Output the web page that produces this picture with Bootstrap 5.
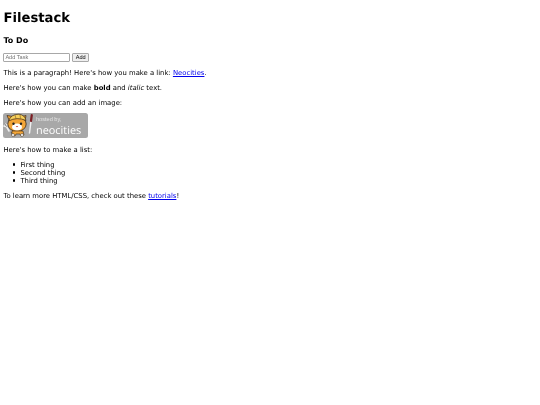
<!DOCTYPE html>
<html lang="en">
<head>
<meta charset="utf-8">
<title>Filestack</title>
<link rel="stylesheet" href="https://cdn.jsdelivr.net/npm/bootstrap@5.3.0/dist/css/bootstrap.min.css">
<style>
html,body{background:#fff;}
body{font-family:"DejaVu Sans",sans-serif;font-size:6.85px;line-height:8px;color:#000;padding:3.4px;text-rendering:geometricPrecision;}
.page-sheet{filter:blur(.3px);}
.page-title{font-size:13.2px;line-height:15.7px;font-weight:700;margin:8px 0 0;}
.sub-title{font-size:8px;line-height:9.2px;font-weight:700;margin:8.5px 0 0;}
.task-form{margin:8px 0 0;height:9px;gap:2px;}
.task-input{width:67px;height:9px;font-family:"Liberation Sans",sans-serif;font-size:5.6px;border:1px solid #a8a8a8;border-radius:1px;padding:0 1px;background:#fff;}
.task-input::placeholder{color:#757575;opacity:1;}
.task-btn{height:9px;width:16.5px;font-family:"Liberation Sans",sans-serif;font-size:5.6px;line-height:7px;border:1px solid #a8a8a8;border-radius:1px;background:#efefef;color:#000;padding:0;}
.copy{margin:7px 0 0;}
.copy a{color:#00e;text-decoration:underline;}
.things{margin:7px 0 0;padding-left:17px;list-style:none;}
.things li::before{content:"";display:inline-block;width:2.2px;height:2.2px;border-radius:50%;background:#000;margin-left:-7.4px;margin-right:5.2px;vertical-align:1.2px;}
.badge-pic{display:block;width:85px;height:25px;margin:6px 0 8px;}
</style>
</head>
<body>
<div class="page-sheet">
<h1 class="page-title">Filestack</h1>
<h3 class="sub-title">To Do</h3>
<form class="task-form d-flex align-items-center">
<input class="task-input" type="text" placeholder="Add Task">
<button class="task-btn" type="button">Add</button>
</form>
<p class="copy">This is a paragraph! Here's how you make a link: <a href="#">Neocities</a>.</p>
<p class="copy">Here's how you can make <strong>bold</strong> and <em>italic</em> text.</p>
<p class="copy">Here's how you can add an image:</p>
<svg class="badge-pic" viewBox="0 0 85 25" role="img" aria-label="hosted by neocities">
<rect width="85" height="25" rx="2.5" fill="#a8a8a8"/>
<!-- wrench -->
<path d="M2 11l4 7M1 13l2 .5 1-2" stroke="#eee" stroke-width="1.6" fill="none" stroke-linecap="round"/>
<path d="M1.5 10.5l2 3M8 19l2 3" stroke="#444" stroke-width=".7"/>
<!-- ears and head -->
<path d="M6 7L4 2.5 10 3.5M17 4l6-1.5-1 6z" fill="#f0a030" stroke="#3a2a1a" stroke-width=".7"/>
<ellipse cx="14" cy="11" rx="9.2" ry="7.5" fill="#f3a638" stroke="#3a2a1a" stroke-width=".8"/>
<!-- helmet -->
<path d="M5.5 8Q8 1 16 1.2 22 2 23 7.5 14 3.5 5.5 8z" fill="#f6cf5a" stroke="#3a2a1a" stroke-width=".7"/>
<path d="M12 1.8l1 4M17 2l.5 3.6" stroke="#7a5a20" stroke-width=".6"/>
<!-- face -->
<ellipse cx="14" cy="14" rx="5" ry="3.6" fill="#fff"/>
<circle cx="10.5" cy="10.8" r="1.2" fill="#222"/><circle cx="18" cy="10.8" r="1.2" fill="#222"/>
<path d="M12.7 13h2.6l-1.3 1.2z" fill="#c0392b"/>
<!-- body -->
<path d="M9 18h11l1 4-3 1-1-2h-4l-1 2-3-1z" fill="#f3a638" stroke="#3a2a1a" stroke-width=".6"/>
<circle cx="10" cy="22" r="1.5" fill="#fff" stroke="#3a2a1a" stroke-width=".5"/>
<circle cx="19" cy="22" r="1.5" fill="#fff" stroke="#3a2a1a" stroke-width=".5"/>
<!-- brush -->
<path d="M26.5 20L28 8" stroke="#eee" stroke-width="1.5" stroke-linecap="round"/>
<path d="M28 8l.8-6" stroke="#7c1f24" stroke-width="2.2" stroke-linecap="round"/>
<text x="33" y="7.6" font-family="Liberation Sans, sans-serif" font-size="5.6" fill="#e4e4e4">hosted by,</text>
<text x="33" y="20.5" font-family="Open Sans, sans-serif" font-size="10.9" fill="#fff">neocities</text>
</svg>
<p class="copy">Here's how to make a list:</p>
<ul class="things">
<li>First thing</li>
<li>Second thing</li>
<li>Third thing</li>
</ul>
<p class="copy">To learn more HTML/CSS, check out these <a href="#">tutorials</a>!</p>
</div>
<script src="https://cdn.jsdelivr.net/npm/bootstrap@5.3.0/dist/js/bootstrap.bundle.min.js"></script>
</body>
</html>
